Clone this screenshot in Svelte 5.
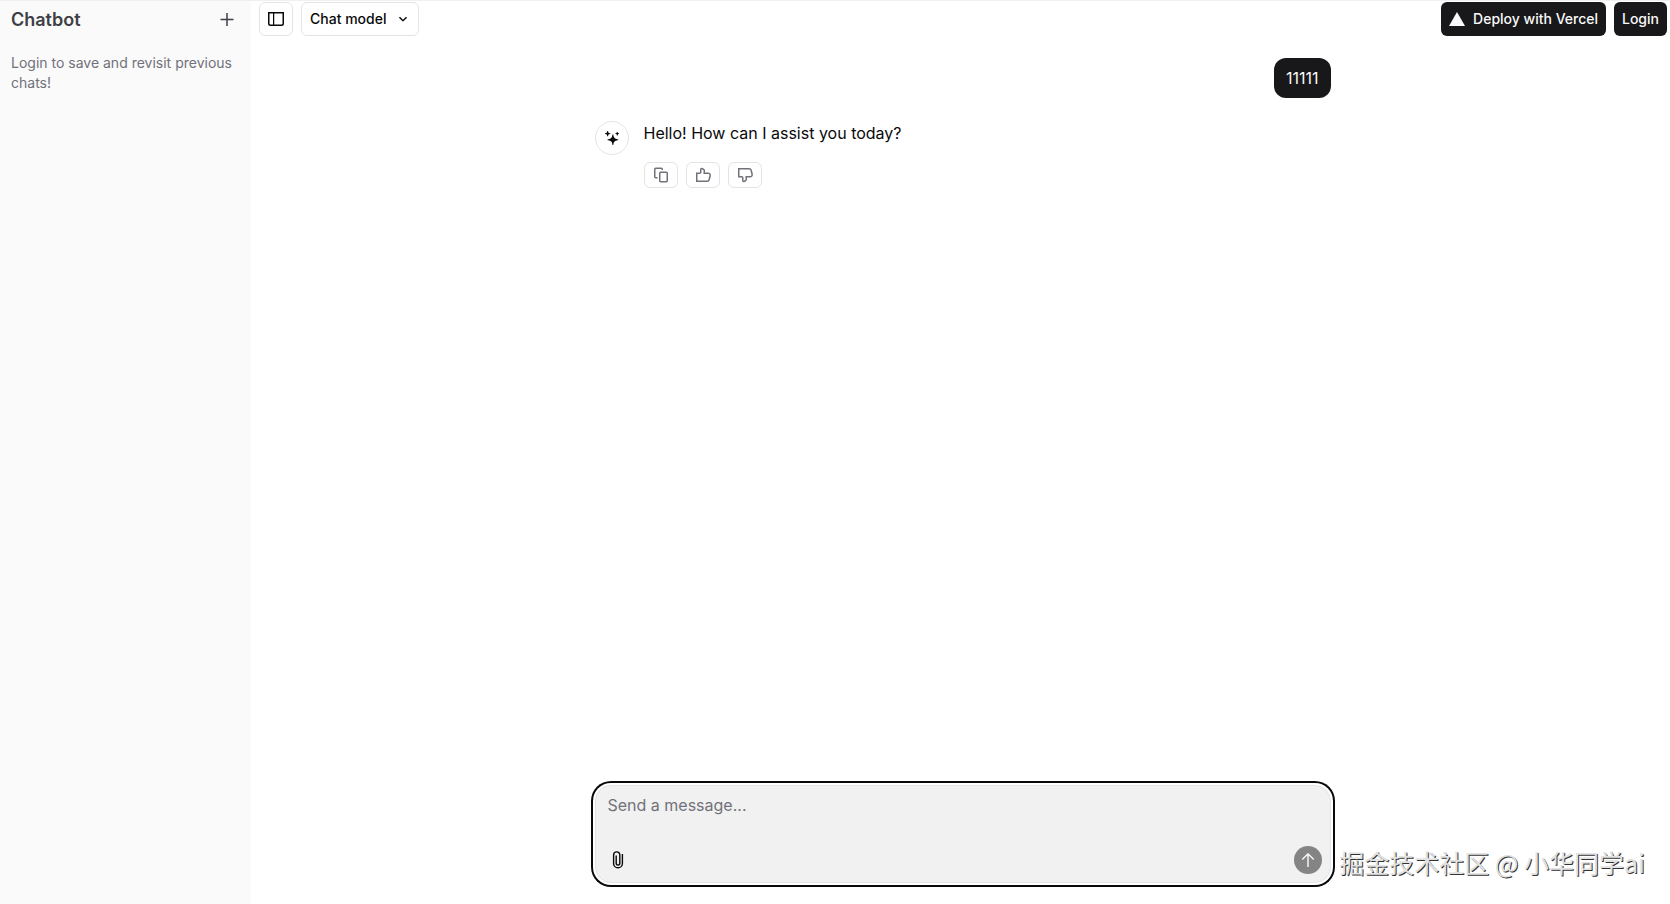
<script>
    let message = '';
    let model = 'chat';

    const thumb = 'M6.895 2.24C6.73 2.12 6.5 2.24 6.5 2.443V5.25C6.5 6.217 5.717 7 4.75 7H2.5v6.5h9.688c.574 0 1.074-.39 1.213-.947l1-4C14.598 7.764 14.002 7 13.188 7H8.5V3.515a.25.25 0 0 0-.105-.204L6.895 2.24ZM5 2.443C5 1.02 6.609.192 7.767 1.02l1.5 1.071c.46.329.733.859.733 1.424V5.5h3.188c1.79 0 3.102 1.681 2.668 3.417l-1 4A2.75 2.75 0 0 1 12.188 15H1V5.5h3.75A.25.25 0 0 0 5 5.25V2.443Z';
    const copy = 'M2.75.5C1.784.5 1 1.284 1 2.25v7.5c0 .967.784 1.75 1.75 1.75H4.5V10H2.75a.25.25 0 0 1-.25-.25v-7.5A.25.25 0 0 1 2.75 2h5.5a.25.25 0 0 1 .25.25V3H10v-.75C10 1.284 9.217.5 8.25.5h-5.5Zm5 4C6.784 4.5 6 5.284 6 6.25v7.5c0 .967.784 1.75 1.75 1.75h5.5c.967 0 1.75-.783 1.75-1.75v-7.5c0-.966-.783-1.75-1.75-1.75h-5.5ZM7.5 6.25A.25.25 0 0 1 7.75 6h5.5a.25.25 0 0 1 .25.25v7.5a.25.25 0 0 1-.25.25h-5.5a.25.25 0 0 1-.25-.25v-7.5Z';

    const actions = [
        { label: 'Copy', path: copy },
        { label: 'Upvote response', path: thumb },
        { label: 'Downvote response', path: thumb, flip: true }
    ];
</script>

<div class="app">
    <aside class="sidebar">
        <div class="sidebar-head">
            <h1>Chatbot</h1>
            <button class="plain" aria-label="New chat">
                <svg width="16" height="16" viewBox="0 0 16 16" fill="currentColor"><path d="M8.75 1H7.25v5.75H1.5v1.5h5.75V14h1.5V8.25h5.75v-1.5H8.75V1Z" /></svg>
            </button>
        </div>
        <p>Login to save and revisit previous chats!</p>
    </aside>

    <main>
        <header>
            <button class="outline toggle" aria-label="Toggle sidebar">
                <svg width="16" height="16" viewBox="0 0 16 16" fill="currentColor" fill-rule="evenodd"><path d="M6.245 2.5H14.5v10a1 1 0 0 1-1 1H6.245v-11Zm-1.25 0H1.5v10a1 1 0 0 0 1 1h2.495v-11ZM0 1h16v11.5a2.5 2.5 0 0 1-2.5 2.5h-11A2.5 2.5 0 0 1 0 12.5V1Z" /></svg>
            </button>
            <div class="model">
                <select class="outline" aria-label="Model" bind:value={model}>
                    <option value="chat">Chat model</option>
                    <option value="reasoning">Reasoning model</option>
                </select>
                <svg width="16" height="16" viewBox="0 0 16 16" fill="currentColor"><path d="m12.06 6.75-3.353 3.354a1 1 0 0 1-1.414 0L3.94 6.75 5 5.69l3 3 3-3 1.06 1.06Z" /></svg>
            </div>
            <a class="dark" href="#deploy">
                <svg width="16" height="16" viewBox="0 0 16 16" fill="currentColor"><path d="m8 1 8 14H0L8 1Z" /></svg>
                Deploy with Vercel
            </a>
            <a class="dark" href="#login">Login</a>
        </header>

        <div class="chat">
            <div class="thread">
                <div class="bubble">11111</div>

                <div class="reply">
                    <div class="avatar">
                        <svg width="14" height="14" viewBox="0 0 16 16" fill="currentColor">
                            <path d="M2.5.5V0h1v.5a2 2 0 0 0 2 2H6v1h-.5a2 2 0 0 0-2 2V6h-1v-.5a2 2 0 0 0-2-2H0v-1h.5a2 2 0 0 0 2-2Z" />
                            <path d="M14.5 4.5V5h-1v-.5a1 1 0 0 0-1-1H12v-1h.5a1 1 0 0 0 1-1V1h1v.5a1 1 0 0 0 1 1h.5v1h-.5a1 1 0 0 0-1 1Z" />
                            <path d="M8.407 4.93 8.5 4h1l.093.93a5 5 0 0 0 4.478 4.477L15 9.5v1l-.93.093a5 5 0 0 0-4.477 4.478L9.5 16h-1l-.093-.93a5 5 0 0 0-4.478-4.477L3 10.5v-1l.93-.093A5 5 0 0 0 8.406 4.93Z" />
                        </svg>
                    </div>
                    <div class="reply-body">
                        <p>Hello! How can I assist you today?</p>
                        <div class="actions">
                            {#each actions as action}
                                <button class="outline" aria-label={action.label}>
                                    <svg class:flip={action.flip} width="16" height="16" viewBox="0 0 16 16" fill="currentColor" fill-rule="evenodd"><path d={action.path} /></svg>
                                </button>
                            {/each}
                        </div>
                    </div>
                </div>
            </div>

            <form on:submit|preventDefault>
                <textarea aria-label="Message" placeholder="Send a message..." rows="1" bind:value={message}></textarea>
                <div class="tools">
                    <button type="button" class="plain" aria-label="Attach file">
                        <svg width="12" height="18" viewBox="0 0 12 18" fill="none" stroke="currentColor" stroke-width="1.4"><path d="M10.4 3v9.4a4.4 4.4 0 0 1-8.8 0V4a3.1 3.1 0 0 1 6.2 0v8.3a1.8 1.8 0 0 1-3.6 0V4.6" /></svg>
                    </button>
                    <button class="send" aria-label="Send message" disabled={!message}>
                        <svg width="16" height="16" viewBox="0 0 16 16" fill="currentColor"><path d="M8.707 1.396a1 1 0 0 0-1.414 0L1.69 7l1.06 1.06 4.5-4.5V15h1.5V3.56l4.5 4.5L14.31 7 8.707 1.396Z" /></svg>
                    </button>
                </div>
            </form>
        </div>
    </main>

    <div class="watermark">掘金技术社区 @ 小华同学ai</div>
</div>

<style>
    :global(body) { margin: 0; background: #fff; }
    .app { position: relative; display: flex; min-height: 100vh; box-sizing: border-box; border-top: 1px solid #f0f0f1; font-family: Inter, "Liberation Sans", sans-serif; font-size: 14px; line-height: 20px; color: #09090b; }
    h1, p { margin: 0; }
    svg { display: block; flex: none; }
    button, select, textarea { box-sizing: border-box; margin: 0; font: inherit; color: inherit; }
    button { display: flex; align-items: center; justify-content: center; padding: 0; border: 0; }
    .plain { background: none; }

    .sidebar { flex: none; width: 251px; box-sizing: border-box; padding: 2px 16px 0 11px; background: #fafafa; color: #3f3f46; }
    .sidebar-head { display: flex; align-items: center; justify-content: space-between; height: 34px; }
    h1 { font-size: 18px; font-weight: 600; line-height: 28px; }
    .sidebar p { margin-top: 16px; color: #71717a; }

    main { flex: 1; min-width: 0; display: flex; flex-direction: column; }
    header { display: flex; gap: 8px; padding: 1px 3px 0 8px; font-weight: 500; }
    .outline { border: 1px solid #e4e4e7; border-radius: 6px; background: #fff; }
    .toggle { width: 34px; height: 34px; }
    .model { display: grid; align-items: center; margin-right: auto; }
    .model select { grid-area: 1 / 1; appearance: none; width: 118px; height: 34px; padding: 0 8px; }
    .model svg { grid-area: 1 / 1; justify-self: end; margin-right: 8px; pointer-events: none; }
    .dark { display: flex; align-items: center; gap: 8px; height: 34px; box-sizing: border-box; padding: 0 8px; border-radius: 6px; background: #18181b; color: #fafafa; text-decoration: none; }

    .chat { flex: 1; display: flex; flex-direction: column; align-items: center; padding: 22px 0 21px 4px; font-size: 16px; line-height: 24px; }
    .thread { flex: 1; display: flex; flex-direction: column; gap: 23px; width: 100%; max-width: 736px; }
    .bubble { align-self: flex-end; padding: 8px 12px; border-radius: 12px; background: #18181b; color: #fafafa; }
    .reply { display: flex; gap: 15px; }
    .avatar { display: flex; align-items: center; justify-content: center; flex: none; width: 32px; height: 32px; border: 1px solid #e4e4e7; border-radius: 50%; }
    .reply-body { display: flex; flex-direction: column; gap: 17px; }
    .actions { display: flex; gap: 8px; color: #71717a; }
    .actions button { width: 34px; height: 26px; }
    .flip { transform: scaleY(-1); }

    form { width: 100%; max-width: 736px; box-sizing: border-box; border: 1px solid #e4e4e7; border-radius: 16px; background: #f1f1f1; box-shadow: 0 0 0 2px #fff, 0 0 0 4px #09090b; }
    textarea { display: block; width: 100%; height: 54px; padding: 7px 12px; border: 0; outline: 0; resize: none; background: none; font-size: 16px; line-height: 24px; }
    textarea::placeholder { color: #71717a; }
    .tools { display: flex; align-items: center; justify-content: space-between; padding: 6px 8px 8px 16px; }
    .send { width: 28px; height: 28px; border-radius: 50%; background: #848485; color: #f4f4f5; }

    .watermark { position: absolute; right: 25px; bottom: 24px; font-family: "Noto Sans CJK SC", sans-serif; font-size: 25px; line-height: 36px; color: #e2e2e2; text-shadow: 1px 1px 0 #333; pointer-events: none; }
</style>
